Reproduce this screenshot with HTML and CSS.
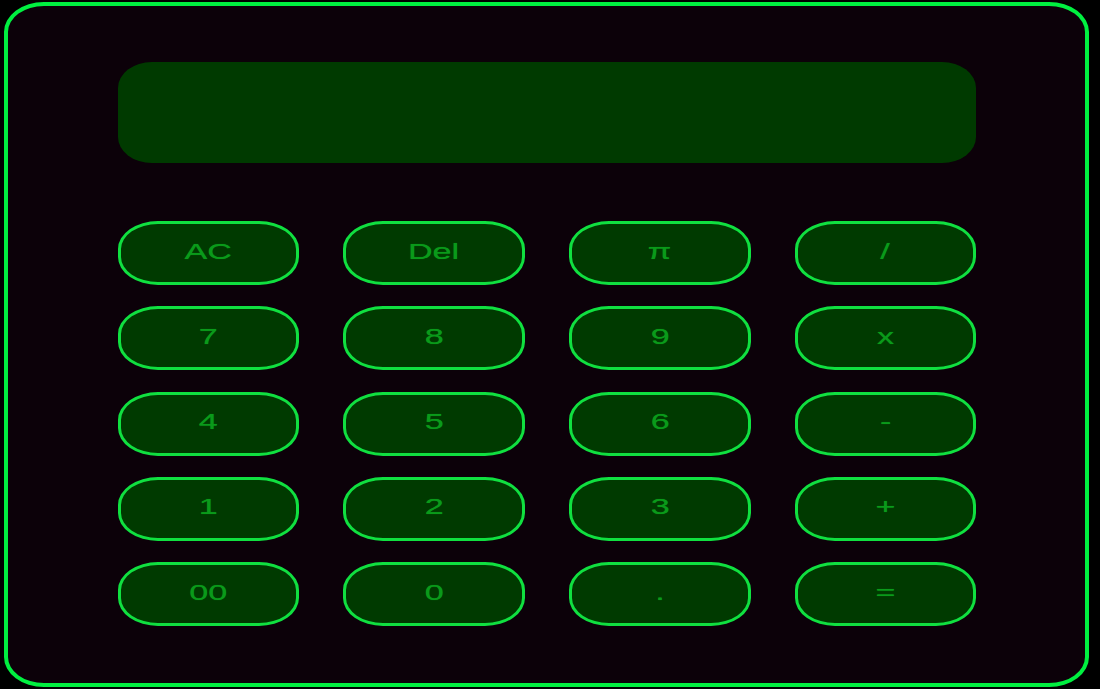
FILE: index.html
```html
<!DOCTYPE html>
<html>
<head>
<meta charset="utf-8">
<link rel="stylesheet" href="styles.css">
</head>
<body>
<div class="calc">
  <div class="display"></div>
  <div class="keys">
    <button class="key"><span class="label">AC</span></button>
    <button class="key"><span class="label">Del</span></button>
    <button class="key"><span class="label">π</span></button>
    <button class="key"><span class="label">/</span></button>
    <button class="key"><span class="label">7</span></button>
    <button class="key"><span class="label">8</span></button>
    <button class="key"><span class="label">9</span></button>
    <button class="key"><span class="label">x</span></button>
    <button class="key"><span class="label">4</span></button>
    <button class="key"><span class="label">5</span></button>
    <button class="key"><span class="label">6</span></button>
    <button class="key"><span class="label">-</span></button>
    <button class="key"><span class="label">1</span></button>
    <button class="key"><span class="label">2</span></button>
    <button class="key"><span class="label">3</span></button>
    <button class="key"><span class="label">+</span></button>
    <button class="key"><span class="label">00</span></button>
    <button class="key"><span class="label">0</span></button>
    <button class="key"><span class="label">.</span></button>
    <button class="key"><span class="label">=</span></button>
  </div>
</div>
</body>
</html>
```
FILE: styles.css
```css
html, body {
  margin: 0;
  padding: 0;
  background: #000;
  width: 1100px;
  height: 689px;
  overflow: hidden;
}
.calc {
  box-sizing: border-box;
  margin: 2px 0 0 4px;
  width: 1085px;
  height: 685px;
  border: 4px solid #00f040;
  border-radius: 40px / 30px;
  background: #0c0109;
  padding: 56px 109px 0 110px;
}
.display {
  height: 101px;
  background: #003a00;
  border-radius: 34px / 26px;
}
.keys {
  margin-top: 58px;
  display: grid;
  grid-template-columns: 181px 182px 182px 181px;
  justify-content: space-between;
  row-gap: 21.3px;
}
.key {
  box-sizing: border-box;
  height: 64px;
  background: #003a00;
  border: 3px solid #10e040;
  border-radius: 40px / 28px;
  color: #0a9a1a;
  font-family: "Liberation Sans", Arial, sans-serif;
  font-size: 22px;
  padding: 0 0 3px 0;
}
.label {
  display: inline-block;
  transform: scaleX(1.55);
  text-shadow: 0 0 0.6px #0a9a1a;
}
```
